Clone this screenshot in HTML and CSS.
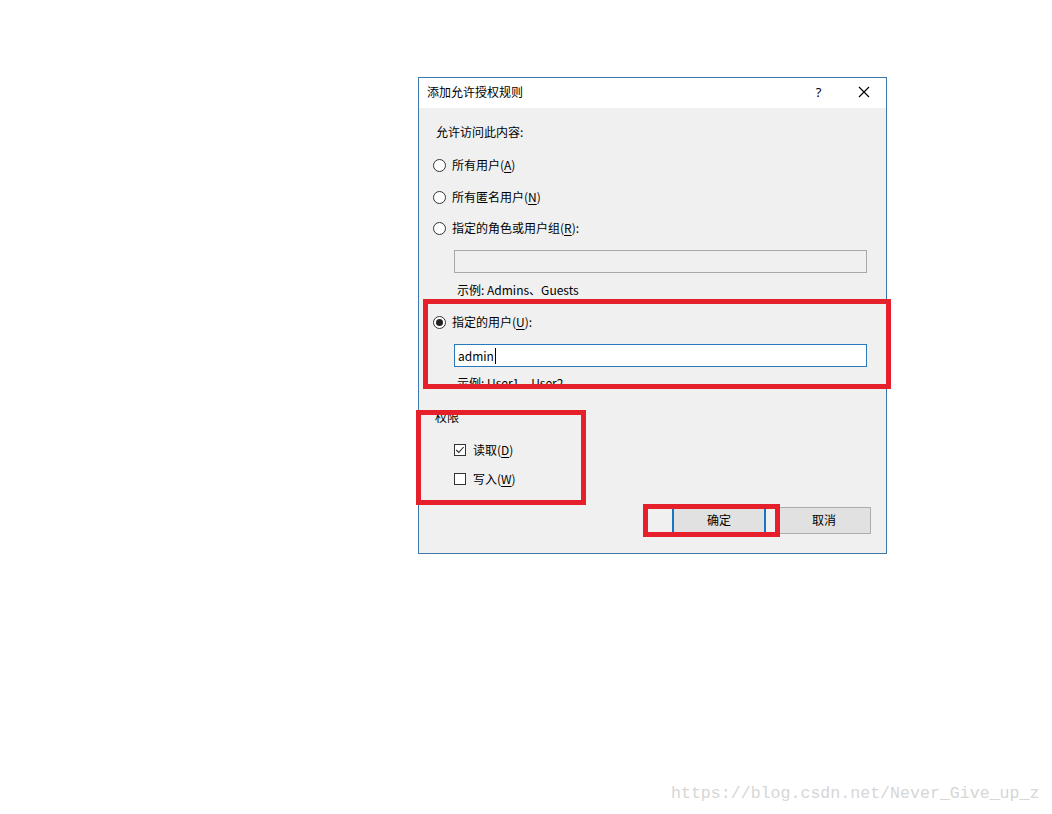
FILE: index.html
```html
<!DOCTYPE html>
<html lang="zh-CN">
<head>
<meta charset="utf-8">
<title>添加允许授权规则</title>
<link rel="stylesheet" href="styles.css">
</head>
<body>
<div class="dialog">
  <div class="titlebar">
    <span class="title">添加允许授权规则</span>
    <span class="tbtn help">?</span>
    <span class="tbtn close"><svg width="12" height="12" viewBox="0 0 12 12"><path d="M1 1 L11 11 M11 1 L1 11" stroke="#000" stroke-width="1.1" fill="none"/></svg></span>
  </div>
  <div class="body">
    <div class="row label">允许访问此内容:</div>
    <div class="row r1 opt"><span class="radio"></span><span>所有用户(<u>A</u>)</span></div>
    <div class="row r2 opt"><span class="radio"></span><span>所有匿名用户(<u>N</u>)</span></div>
    <div class="row r3 opt"><span class="radio"></span><span>指定的角色或用户组(<u>R</u>):</span></div>
    <div class="input disabled"></div>
    <div class="row example ex1">示例: Admins、Guests</div>
    <div class="row r4 opt"><span class="radio on"><span class="dot"></span></span><span>指定的用户(<u>U</u>):</span></div>
    <div class="input focused"><span class="caret">admin</span></div>
    <div class="row example ex2">示例: User1、User2</div>
    <div class="row perm">权限</div>
    <div class="row c1 chk"><span class="box"><svg width="12" height="12" viewBox="0 0 12 12"><path d="M2.3 6 L4.8 8.5 L9.6 3" stroke="#222" stroke-width="1.1" fill="none"/></svg></span><span>读取(<u>D</u>)</span></div>
    <div class="row c2 chk"><span class="box"></span><span>写入(<u>W</u>)</span></div>
    <div class="buttons">
      <span class="btn default">确定</span>
      <span class="btn">取消</span>
    </div>
  </div>
</div>
<div class="mark m1"></div>
<div class="mark m2"></div>
<div class="mark m3"></div>
<div class="watermark">https://blog.csdn.net/Never_Give_up_z</div>
</body>
</html>
```
FILE: styles.css
```css
html, body {
  margin: 0;
  padding: 0;
  background: #ffffff;
}
body {
  position: relative;
  width: 1052px;
  height: 814px;
  overflow: hidden;
  font-family: "Noto Sans CJK SC", "Noto Sans", sans-serif;
  font-size: 12px;
  color: #000;
  padding-top: 77px;
  box-sizing: border-box;
}
u { text-decoration: underline; text-underline-offset: 2px; }

.dialog {
  margin-left: 418px;
  width: 469px;
  box-sizing: border-box;
  border: 1px solid #3d78a8;
  background: #f0f0f0;
}
.titlebar {
  height: 30px;
  background: #ffffff;
  display: flex;
  align-items: center;
  padding-left: 8px;
}
.title { flex: 1; padding-bottom: 3px; }
.tbtn {
  width: 45px;
  height: 30px;
  display: flex;
  align-items: center;
  justify-content: center;
}
.help { font-size: 13px; font-family: "Noto Sans", sans-serif; padding-bottom: 3px; box-sizing: border-box; }
.close { padding-bottom: 2px; box-sizing: border-box; }

.body {
  padding: 0 15px 19px 14px;
  display: flex;
  flex-direction: column;
}
.row {
  height: 20px;
  display: flex;
  align-items: center;
  line-height: 20px;
}
.label { margin-top: 14px; margin-left: 3px; }
.r1 { margin-top: 13px; }
.r2 { margin-top: 12px; }
.r3 { margin-top: 11px; }
.r4 { margin-top: 12px; }
.opt { gap: 6px; }
.radio {
  width: 13px;
  height: 13px;
  box-sizing: border-box;
  border: 1px solid #333;
  border-radius: 50%;
  background: #fff;
  display: flex;
  align-items: center;
  justify-content: center;
}
.dot {
  width: 7px;
  height: 7px;
  border-radius: 50%;
  background: #222;
}
.input {
  margin-left: 21px;
  width: 413px;
  height: 23px;
  box-sizing: border-box;
  margin-top: 12px;
  display: flex;
  align-items: center;
  padding-left: 3px;
}
.disabled {
  border: 1px solid #a8a8a8;
  background: #f0f0f0;
}
.focused {
  border: 1px solid #2878c0;
  background: #ffffff;
}
.caret {
  border-right: 1px solid #000;
  padding-right: 1px;
  line-height: 16px;
}
.example { margin-left: 24px; }
.ex1 { margin-top: 7px; }
.ex2 { margin-top: 6px; }
.perm { margin-top: 14px; margin-left: 2px; }
.c1 { margin-top: 13px; }
.c2 { margin-top: 9px; }
.chk { margin-left: 21px; gap: 7px; }
.box {
  width: 12px;
  height: 12px;
  box-sizing: border-box;
  border: 1px solid #333;
  background: #fff;
  display: flex;
  align-items: center;
  justify-content: center;
}
.box svg { display: block; flex: none; }
.buttons {
  margin-top: 18px;
  display: flex;
  justify-content: flex-end;
  gap: 11px;
}
.btn {
  width: 94px;
  height: 27px;
  box-sizing: border-box;
  border: 1px solid #adadad;
  background: #e1e1e1;
  display: flex;
  align-items: center;
  justify-content: center;
  padding-bottom: 2px;
}
.btn.default {
  border: 2px solid #1a74c4;
}

.mark {
  position: absolute;
  border: 5px solid #e5202a;
  box-sizing: border-box;
}
.m1 { left: 423px; top: 299px; width: 468px; height: 90px; }
.m2 { left: 416px; top: 410px; width: 170px; height: 95px; }
.m3 { left: 643px; top: 504px; width: 137px; height: 33px; }

.watermark {
  position: absolute;
  left: 671px;
  top: 784px;
  font-family: "Liberation Mono", monospace;
  font-size: 16.6px;
  color: #d6d6d6;
  white-space: nowrap;
}
```
